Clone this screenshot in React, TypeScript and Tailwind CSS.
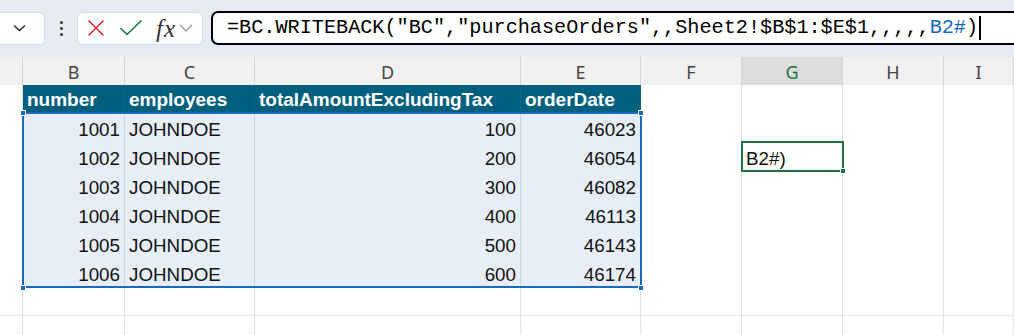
const rows = [
  ["1001", "JOHNDOE", "100", "46023"],
  ["1002", "JOHNDOE", "200", "46054"],
  ["1003", "JOHNDOE", "300", "46082"],
  ["1004", "JOHNDOE", "400", "46113"],
  ["1005", "JOHNDOE", "500", "46143"],
  ["1006", "JOHNDOE", "600", "46174"],
];

const letters = ["", "B", "C", "D", "E", "F", "G", "H", "I"];

const gridCols = "grid grid-cols-[23px_102px_130px_266px_120px_101px_101px_101px_70px]";

function FormulaBar() {
  return (
    <div className="flex h-[57px] items-center bg-[#e6eaf1] pb-[1px]">
      <div className="ml-[-10px] flex h-[33px] w-[55px] items-center justify-end rounded-md border border-[#d6dae1] bg-white pr-[18px]">
        <svg width="13" height="8" viewBox="0 0 13 8" fill="none">
          <path d="M1 1.5 L6.5 6.5 L12 1.5" stroke="#333" strokeWidth="1.6" />
        </svg>
      </div>
      <div className="flex w-[32px] flex-col items-center gap-[3px]">
        <span className="h-[3px] w-[3px] rounded-full bg-[#333]" />
        <span className="h-[3px] w-[3px] rounded-full bg-[#333]" />
        <span className="h-[3px] w-[3px] rounded-full bg-[#333]" />
      </div>
      <div className="flex h-[33px] w-[126px] items-center rounded-md border border-[#d6dae1] bg-white">
        <svg className="ml-[9px]" width="18" height="18" viewBox="0 0 18 18" fill="none">
          <path d="M1.5 1.5 L16.5 16.5 M16.5 1.5 L1.5 16.5" stroke="#d13438" strokeWidth="1.6" />
        </svg>
        <svg className="ml-[14px]" width="24" height="18" viewBox="0 0 24 18" fill="none">
          <path d="M1.5 9 L8 15.5 L22.5 1.5" stroke="#107c41" strokeWidth="1.6" />
        </svg>
        <span className="ml-[13px] font-['Liberation_Serif',serif] text-[25px] italic leading-none tracking-[1px] text-[#333]">
          fx
        </span>
        <svg className="ml-[3px]" width="14" height="8" viewBox="0 0 14 8" fill="none">
          <path d="M1 1 L7 7 L13 1" stroke="#9a9a9a" strokeWidth="1.4" />
        </svg>
      </div>
      <div className="ml-[8px] flex h-[34px] flex-1 items-center rounded-l-[7px] border-2 border-r-0 border-black bg-white pl-[14px] font-['Liberation_Mono',monospace] text-[20.2px] text-black">
        <span className="whitespace-pre">
          =BC.WRITEBACK("BC","purchaseOrders",,Sheet2!$B$1:$E$1,,,,,
          <span className="text-[#1769c0]">B2#</span>)
        </span>
        <span className="ml-[1px] h-[24px] w-[1.5px] bg-black" />
      </div>
    </div>
  );
}

function ColumnHeaders() {
  return (
    <div className={`${gridCols} h-[28px] bg-[#f0f0f0] font-['Noto_Sans',sans-serif] text-[18px] text-[#444]`}>
      {letters.map((l, i) => (
        <div
          key={i}
          className={
            l === "G"
              ? "flex items-center justify-center border-r border-b-2 border-r-[#d4d4d4] border-b-[#1f7244] bg-[#dcdcdc] pt-[2px] text-[#1f7244]"
              : "flex items-center justify-center border-r border-b border-r-[#d4d4d4] border-b-[#a0a0a0] pt-[1px]"
          }
        >
          {l}
        </div>
      ))}
    </div>
  );
}

function SheetGrid() {
  const blank = "border-r border-b border-[#e1e1e1] bg-white";
  const tint = "border-r border-b border-[#cfd6e3] bg-[#e8eef8] px-[4px] pt-[3px] flex items-center";
  return (
    <div className="relative font-['Liberation_Sans',Arial,sans-serif] text-[18.8px] text-[#111]">
      <div className={`${gridCols} h-[28px]`}>
        <div className={blank} />
        {["number", "employees", "totalAmountExcludingTax", "orderDate"].map((h) => (
          <div
            key={h}
            className="flex items-center border-r border-[#0a6788] bg-[#035f7e] px-[4px] pt-[1px] text-[19px] font-bold text-white"
          >
            {h}
          </div>
        ))}
        <div className={blank} />
        <div className={blank} />
        <div className={blank} />
        <div className={blank} />
      </div>
      {rows.map((r, i) => (
        <div key={i} className={`${gridCols} h-[29px]`}>
          <div className={blank} />
          <div className={`${tint} justify-end`}>{r[0]}</div>
          <div className={tint}>{r[1]}</div>
          <div className={`${tint} justify-end`}>{r[2]}</div>
          <div className={`${tint} justify-end`}>{r[3]}</div>
          <div className={blank} />
          <div className={`${blank} flex items-center px-[4px] pt-[3px]`}>{i === 1 ? "B2#)" : ""}</div>
          <div className={blank} />
          <div className={blank} />
        </div>
      ))}
      {[0, 1].map((i) => (
        <div key={`e${i}`} className={`${gridCols} h-[29px]`}>
          {letters.map((_, j) => (
            <div key={j} className={blank} />
          ))}
        </div>
      ))}

      {/* spill range selection */}
      <div className="pointer-events-none absolute left-[22px] top-[27px] h-[176px] w-[620px] border-2 border-[#1b68c2]" />
      <div className="absolute left-[20px] top-[25px] h-[6px] w-[6px] border border-white bg-[#1b68c2]" />
      <div className="absolute left-[638px] top-[25px] h-[6px] w-[6px] border border-white bg-[#1b68c2]" />
      <div className="absolute left-[20px] top-[200px] h-[6px] w-[6px] border border-white bg-[#1b68c2]" />
      <div className="absolute left-[638px] top-[200px] h-[6px] w-[6px] border border-white bg-[#1b68c2]" />

      {/* active cell */}
      <div className="pointer-events-none absolute left-[741px] top-[56px] h-[31px] w-[103px] border-2 border-[#1f7244]" />
      <div className="absolute left-[840px] top-[83px] h-[6px] w-[6px] border border-white bg-[#1f7244]" />
    </div>
  );
}

export default function App() {
  return (
    <div className="h-[335px] w-[1014px] overflow-hidden bg-white">
      <FormulaBar />
      <ColumnHeaders />
      <SheetGrid />
    </div>
  );
}
